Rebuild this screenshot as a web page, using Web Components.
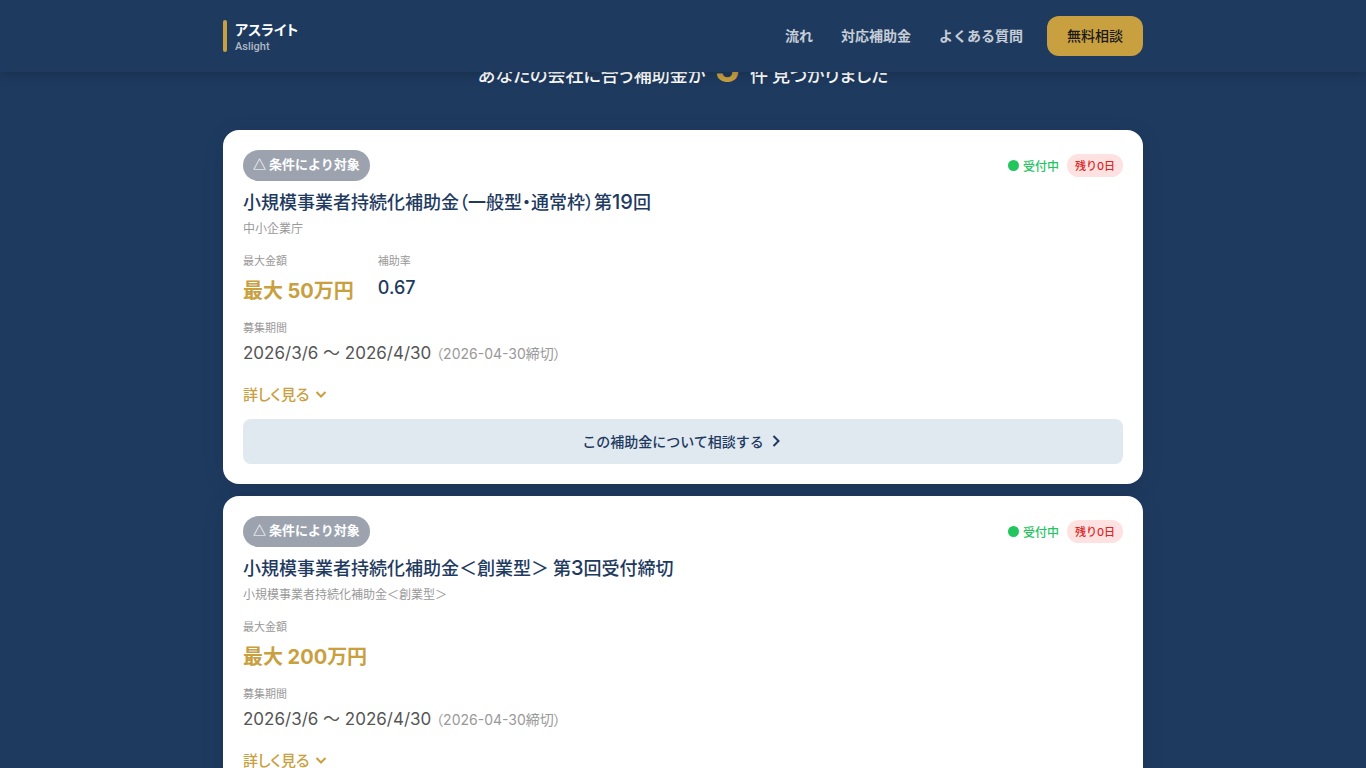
<!DOCTYPE html>
<html lang="ja">
<head>
<meta charset="utf-8">
<meta name="viewport" content="width=device-width, initial-scale=1">
<title>アスライト | 補助金検索結果</title>
<style>
  :root {
    --navy: #1e3a5f;
    --gold: #c9a040;
    --muted: #999;
    --num: Inter, "Noto Sans CJK JP", sans-serif;
  }
  body {
    margin: 0;
    background: var(--navy);
    font-family: "Noto Sans CJK JP", sans-serif;
    font-feature-settings: "palt";
  }
  .digits { font-family: var(--num); font-size: 20px; line-height: 1; }
</style>
</head>
<body>
<site-header></site-header>
<result-list>
  <subsidy-card badge="△ 条件により対象" days="0">
    <span slot="title">小規模事業者持続化補助金（一般型・通常枠）第<span class="digits">19</span>回</span>
    <span slot="org">中小企業庁</span>
    <span slot="amount">50</span>
    <span slot="rate">0.67</span>
  </subsidy-card>
  <subsidy-card badge="△ 条件により対象" days="0">
    <span slot="title">小規模事業者持続化補助金＜創業型＞ 第<span class="digits">3</span>回受付締切</span>
    <span slot="org">小規模事業者持続化補助金＜創業型＞</span>
    <span slot="amount">200</span>
  </subsidy-card>
</result-list>

<script>
class SiteHeader extends HTMLElement {
  constructor() {
    super();
    this.attachShadow({ mode: "open" }).innerHTML = `
      <style>
        :host { display: block; position: sticky; top: 0; z-index: 10; background: var(--navy); box-shadow: 0 2px 12px rgba(0,0,0,.2); }
        .bar { max-width: 920px; height: 72px; margin: 0 auto; display: flex; align-items: center; justify-content: space-between; }
        a { text-decoration: none; }
        .logo { display: flex; align-items: center; gap: 8px; }
        .mark { width: 4px; height: 32px; border-radius: 2px; background: var(--gold); }
        .names { display: flex; flex-direction: column; padding-top: 3px; }
        .ja { color: #fff; font-size: 14px; line-height: 18px; font-weight: 700; }
        .en { color: rgba(255,255,255,.65); font: 500 11px/18px Roboto, sans-serif; }
        nav { display: flex; align-items: center; gap: 28px; padding-bottom: 3px; font-feature-settings: normal; }
        nav a { color: rgba(255,255,255,.75); font-size: 14px; line-height: 20px; font-weight: 700; }
        .right { display: flex; align-items: center; gap: 24px; }
        button { height: 40px; padding: 0 20px 3px; border: 0; border-radius: 12px; background: var(--gold); color: #1a1a1a; font: 500 14px/20px "Noto Sans CJK JP", sans-serif; }
      </style>
      <div class="bar">
        <a class="logo" href="#"><span class="mark"></span><span class="names"><span class="ja">アスライト</span><span class="en">Aslight</span></span></a>
        <div class="right">
          <nav><a href="#flow">流れ</a><a href="#subsidies">対応補助金</a><a href="#faq">よくある質問</a></nav>
          <button type="button">無料相談</button>
        </div>
      </div>`;
  }
}

class ResultList extends HTMLElement {
  constructor() {
    super();
    this.attachShadow({ mode: "open" }).innerHTML = `
      <style>
        :host { display: block; max-width: 920px; margin: 0 auto; padding-bottom: 60px; }
        h2 { margin: -24px 0 32px; text-align: center; color: #fff; font-size: 18px; line-height: 48px; font-weight: 500; }
        strong { margin: 0 10px 0 5px; color: var(--gold); font: 700 40px/1 Inter, sans-serif; }
        .cards { display: flex; flex-direction: column; gap: 12px; }
      </style>
      <h2>あなたの会社に合う補助金が <strong>5</strong>件 見つかりました</h2>
      <div class="cards"><slot></slot></div>`;
  }
}

class SubsidyCard extends HTMLElement {
  connectedCallback() {
    const hasRate = this.querySelector('[slot="rate"]');
    this.attachShadow({ mode: "open" }).innerHTML = `
      <style>
        :host { display: block; padding: 20px; border-radius: 16px; background: #fff; color: var(--navy); box-shadow: 0 4px 24px rgba(0,0,0,.08); }
        .top { display: flex; align-items: center; justify-content: space-between; font-feature-settings: normal; }
        .badge { padding: 4px 10px 7px; border-radius: 16px; background: #9ca3af; color: #fff; font-size: 13px; line-height: 20px; font-weight: 700; }
        .status { display: flex; align-items: center; gap: 8px; font-size: 12px; font-weight: 500; }
        .open { display: flex; align-items: center; gap: 4px; color: #22c55e; }
        .dot { width: 11px; height: 11px; border-radius: 50%; background: #22c55e; }
        .left { padding: 3px 8px; border-radius: 12px; background: #fee2e2; color: #dc2626; font-size: 11px; line-height: 17px; }
        h3 { margin: 7px 0 4px; font-size: 18px; line-height: 27px; font-weight: 500; }
        p, dl, dd { margin: 0; }
        .org { color: var(--muted); font-size: 12px; line-height: 18px; }
        .meta { display: flex; gap: 24px; margin: 15px 0; }
        dt { color: var(--muted); font-size: 11px; line-height: 16px; }
        .amount { margin-top: 8px; color: var(--gold); font-size: 20px; line-height: 28px; font-weight: 700; }
        .rate { margin-top: 10px; font: 500 18px/20px var(--num); }
        .num { font-family: var(--num); line-height: 1; }
        .date { margin-top: 6px; color: #555; font: 400 17px/24px var(--num); font-feature-settings: "palt"; }
        small { color: var(--muted); font-size: 14px; line-height: 1; }
        button { display: flex; align-items: center; border: 0; padding: 0; background: none; font-family: inherit; font-size: 14px; line-height: 21px; font-weight: 500; }
        .more { margin: 18px 0 15px; gap: 6px; color: var(--gold); font-size: 15px; font-feature-settings: "palt"; }
        .ask { width: 100%; height: 45px; padding: 0 4px 1px 0; justify-content: center; gap: 8px; border-radius: 8px; background: #e0e8f0; color: var(--navy); }
        svg { fill: none; stroke: currentColor; stroke-width: 2; }
      </style>
      <div class="top">
        <span class="badge">${this.getAttribute("badge")}</span>
        <div class="status">
          <span class="open"><span class="dot"></span>受付中</span>
          <span class="left">残り<span class="num">${this.getAttribute("days")}</span>日</span>
        </div>
      </div>
      <h3><slot name="title"></slot></h3>
      <p class="org"><slot name="org"></slot></p>
      <dl class="meta">
        <div><dt>最大金額</dt><dd class="amount">最大 <span class="num"><slot name="amount"></slot></span>万円</dd></div>
        ${hasRate ? '<div><dt>補助率</dt><dd class="rate"><slot name="rate"></slot></dd></div>' : ""}
      </dl>
      <dl><dt>募集期間</dt><dd class="date">2026/3/6 〜 2026/4/30 <small>（2026-04-30締切）</small></dd></dl>
      <button class="more" type="button">詳しく見る
        <svg width="12" height="12" viewBox="0 0 12 12"><path d="M1.500 4 6 8.500 10.500 4"/></svg></button>
      <button class="ask" type="button">この補助金について相談する
        <svg width="8" height="12" viewBox="0 0 8 12"><path d="M1.500 1 6.500 6 1.500 11"/></svg></button>`;
  }
}

customElements.define("site-header", SiteHeader);
customElements.define("result-list", ResultList);
customElements.define("subsidy-card", SubsidyCard);
</script>
</body>
</html>
